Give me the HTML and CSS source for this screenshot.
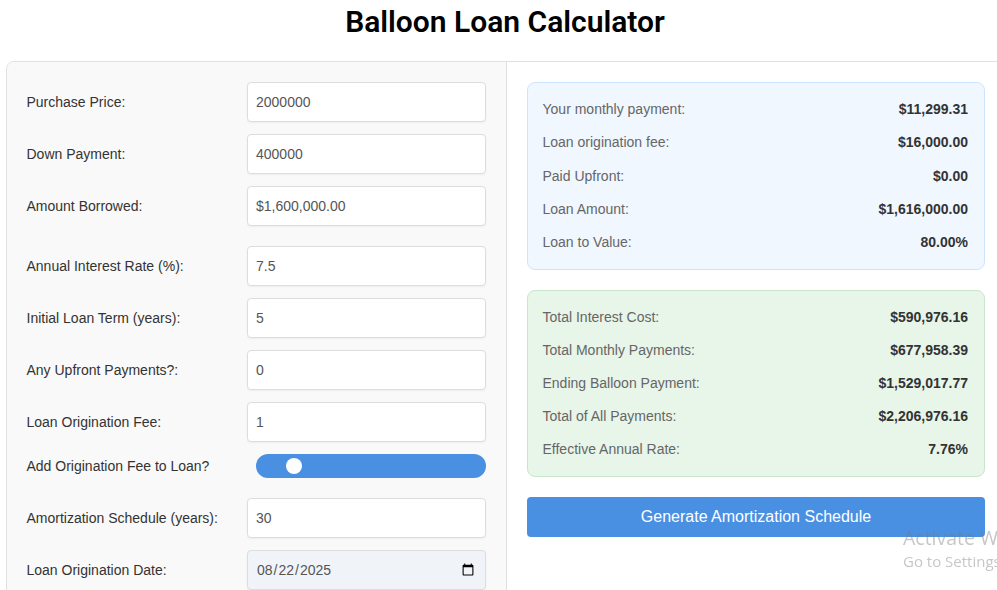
FILE: index.html
```html
<!DOCTYPE html>
<html lang="en">
<head>
  <meta charset="UTF-8">
  <title>Balloon Loan Calculator</title>
  <link rel="stylesheet" href="styles.css">
</head>
<body>

  <h1>Balloon Loan Calculator</h1>

  <div class="calculator">

    <!-- Inputs -->
    <div class="input-panel">
      <div class="form-group">
        <label for="price">Purchase Price:</label>
        <input type="text" id="price" value="2000000">
      </div>
      <div class="form-group">
        <label for="down">Down Payment:</label>
        <input type="text" id="down" value="400000">
      </div>
      <div class="form-group form-group-last">
        <label for="borrowed">Amount Borrowed:</label>
        <input type="text" id="borrowed" value="$1,600,000.00">
      </div>
      <div class="form-group">
        <label for="rate">Annual Interest Rate (%):</label>
        <input type="text" id="rate" value="7.5">
      </div>
      <div class="form-group">
        <label for="term">Initial Loan Term (years):</label>
        <input type="text" id="term" value="5">
      </div>
      <div class="form-group">
        <label for="upfront">Any Upfront Payments?:</label>
        <input type="text" id="upfront" value="0">
      </div>
      <div class="form-group">
        <label for="fee">Loan Origination Fee:</label>
        <input type="text" id="fee" value="1">
      </div>
      <div class="form-group form-group-toggle">
        <label>Add Origination Fee to Loan?</label>
        <div class="toggle"><span class="toggle-knob"></span></div>
      </div>
      <div class="form-group">
        <label for="schedule">Amortization Schedule (years):</label>
        <input type="text" id="schedule" value="30">
      </div>
      <div class="form-group">
        <label for="date">Loan Origination Date:</label>
        <input type="date" class="date-input" id="date" value="2025-08-22">
      </div>
    </div>

    <!-- Results -->
    <div class="result-panel">
      <div class="result-box result-blue">
        <div class="result-row"><span>Your monthly payment:</span><strong>$11,299.31</strong></div>
        <div class="result-row"><span>Loan origination fee:</span><strong>$16,000.00</strong></div>
        <div class="result-row"><span>Paid Upfront:</span><strong>$0.00</strong></div>
        <div class="result-row"><span>Loan Amount:</span><strong>$1,616,000.00</strong></div>
        <div class="result-row"><span>Loan to Value:</span><strong>80.00%</strong></div>
      </div>
      <div class="result-box result-green">
        <div class="result-row"><span>Total Interest Cost:</span><strong>$590,976.16</strong></div>
        <div class="result-row"><span>Total Monthly Payments:</span><strong>$677,958.39</strong></div>
        <div class="result-row"><span>Ending Balloon Payment:</span><strong>$1,529,017.77</strong></div>
        <div class="result-row"><span>Total of All Payments:</span><strong>$2,206,976.16</strong></div>
        <div class="result-row"><span>Effective Annual Rate:</span><strong>7.76%</strong></div>
      </div>
      <button class="form-button">Generate Amortization Schedule</button>
    </div>

  </div>

  <div class="watermark">
    <div class="watermark-title">Activate Windows</div>
    <div class="watermark-sub">Go to Settings to activate Windows.</div>
  </div>

</body>
</html>
```

FILE: styles.css
```css
html, body {
  height: 590px;
  overflow: hidden;
}
body {
  margin: 0;
  background-color: white;
  font-family: "Liberation Sans", Arial, sans-serif;
  font-size: 14px;
  color: #333;
}
h1 {
  width: 1000px;
  margin: 0 0 0 5px;
  height: 61px;
  padding-top: 4px;
  box-sizing: border-box;
  text-align: center;
  font-family: Roboto, sans-serif;
  font-size: 30px;
  line-height: 36px;
  font-weight: 600;
  color: black;
}
.calculator {
  display: flex;
  width: 1000px;
  margin-left: 6px;
  box-sizing: border-box;
  border: 1px solid #e0e0e0;
  border-radius: 8px;
}
.input-panel {
  width: 500px;
  box-sizing: border-box;
  padding: 20px 20px 20px 19.5px;
  background: #f9f9f9;
  border-right: 1px solid #e0e0e0;
  border-radius: 8px 0 0 8px;
}
.form-group {
  display: flex;
  align-items: center;
  margin-bottom: 12px;
}
.form-group-last {
  margin-bottom: 20px;
}
.form-group-toggle {
  margin-bottom: 20px;
}
label {
  width: 220.5px;
  flex-shrink: 0;
}
input {
  width: 239px;
  height: 40px;
  box-sizing: border-box;
  padding: 0 8px;
  background: white;
  border: 1px solid #ddd;
  border-radius: 4px;
  box-shadow: 0 1px 2px rgba(0, 0, 0, 0.05);
  font-family: "Liberation Sans", Arial, sans-serif;
  font-size: 14px;
  color: #555;
}
.date-input {
  background: #f0f4f8;
}
.toggle {
  position: relative;
  width: 230px;
  height: 24px;
  margin-left: 9px;
  background: #4a90e2;
  border-radius: 12px;
}
.toggle-knob {
  position: absolute;
  left: 30px;
  top: 4px;
  width: 16px;
  height: 16px;
  background: white;
  border-radius: 50%;
}
.result-panel {
  flex: 1;
  padding: 20px;
}
.result-box {
  box-sizing: border-box;
  height: 188px;
  padding: 15px 16px 15px 14.5px;
  margin-bottom: 20px;
  border-radius: 8px;
}
.result-blue {
  background: #f0f7ff;
  border: 1px solid #cce5ff;
}
.result-green {
  height: 187px;
  background: #e8f5e9;
  border: 1px solid #c8e6c9;
}
.result-row {
  display: flex;
  justify-content: space-between;
  line-height: 23px;
  margin-bottom: 10.25px;
  color: #666;
}
.result-green .result-row {
  margin-bottom: 10px;
}
.result-row strong {
  color: #333;
}
.form-button {
  display: block;
  width: 100%;
  height: 40px;
  background-color: #4a90e2;
  border: none;
  border-radius: 4px;
  color: white;
  font-family: "Liberation Sans", Arial, sans-serif;
  font-size: 16px;
}
.watermark {
  position: fixed;
  left: 903px;
  top: 525px;
  white-space: nowrap;
  font-family: "Open Sans", sans-serif;
  color: rgba(120, 120, 120, 0.42);
}
.watermark-title {
  font-size: 19.5px;
  line-height: 26px;
}
.watermark-sub {
  font-size: 15px;
  line-height: 21px;
}
```
